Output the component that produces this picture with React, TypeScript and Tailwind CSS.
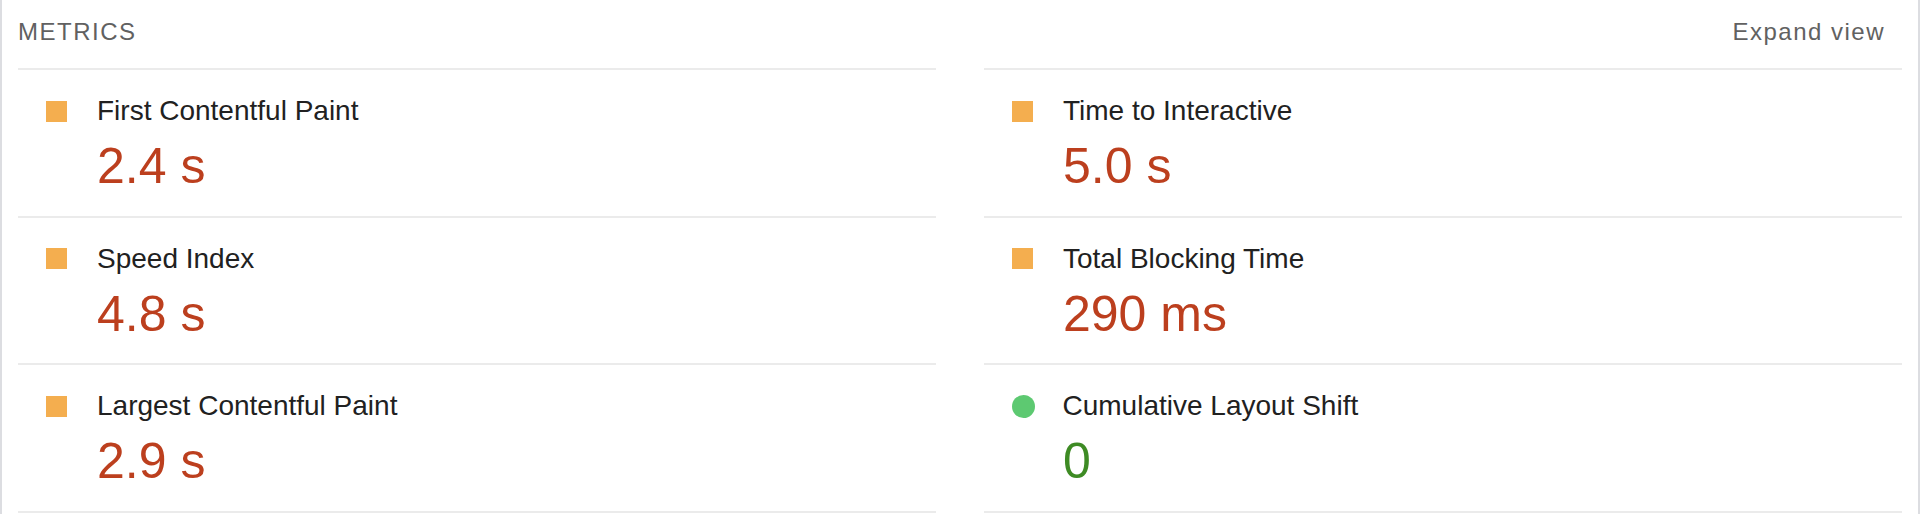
type Rating = "average" | "pass"

interface Metric {
  label: string
  value: string
  rating: Rating
}

const left: Metric[] = [
  { label: "First Contentful Paint", value: "2.4 s", rating: "average" },
  { label: "Speed Index", value: "4.8 s", rating: "average" },
  { label: "Largest Contentful Paint", value: "2.9 s", rating: "average" },
]

const right: Metric[] = [
  { label: "Time to Interactive", value: "5.0 s", rating: "average" },
  { label: "Total Blocking Time", value: "290 ms", rating: "average" },
  { label: "Cumulative Layout Shift", value: "0", rating: "pass" },
]

function MetricCell({ metric }: { metric: Metric }) {
  const pass = metric.rating === "pass"
  return (
    <div className="border-t-2 border-[#ebebeb] last:border-b-2 pt-[25px] pb-[19.5px] pl-[28px]">
      <div className="flex items-center">
        {pass ? (
          <span className="w-[23px] h-[23px] rounded-full bg-[#5dc971] mr-[28px] -ml-[0.5px]" />
        ) : (
          <span className="w-[21px] h-[21px] bg-[#f4ae4f] mr-[30px]" />
        )}
        <span className="text-[28px] leading-[32px] text-[#212121]">{metric.label}</span>
      </div>
      <div
        className={
          "mt-[9px] pl-[51px] text-[50px] leading-[60px] " +
          (pass ? "text-[#3e8b24]" : "text-[#bc3f1e]")
        }
      >
        {metric.value}
      </div>
    </div>
  )
}

export default function App() {
  return (
    <div className="w-[1922px] h-[514px] bg-white" style={{ fontFamily: '"Liberation Sans", Arial, sans-serif' }}>
      <div className="w-[1920px] h-[514px] border-x-2 border-[#dcdde1] px-[16px]">
        {/* header */}
        <div className="flex items-center justify-between pt-[18px] pb-[22px] pr-[17px]">
          <span className="text-[24px] leading-[28px] tracking-[1.5px] text-[#616161]">METRICS</span>
          <span className="text-[24px] leading-[28px] tracking-[1.5px] text-[#616161]">Expand view</span>
        </div>

        {/* metric columns */}
        <div className="grid grid-cols-2 gap-x-[48px]">
          <div className="flex flex-col">
            {left.map((m) => (
              <MetricCell key={m.label} metric={m} />
            ))}
          </div>
          <div className="flex flex-col">
            {right.map((m) => (
              <MetricCell key={m.label} metric={m} />
            ))}
          </div>
        </div>
      </div>
    </div>
  )
}
